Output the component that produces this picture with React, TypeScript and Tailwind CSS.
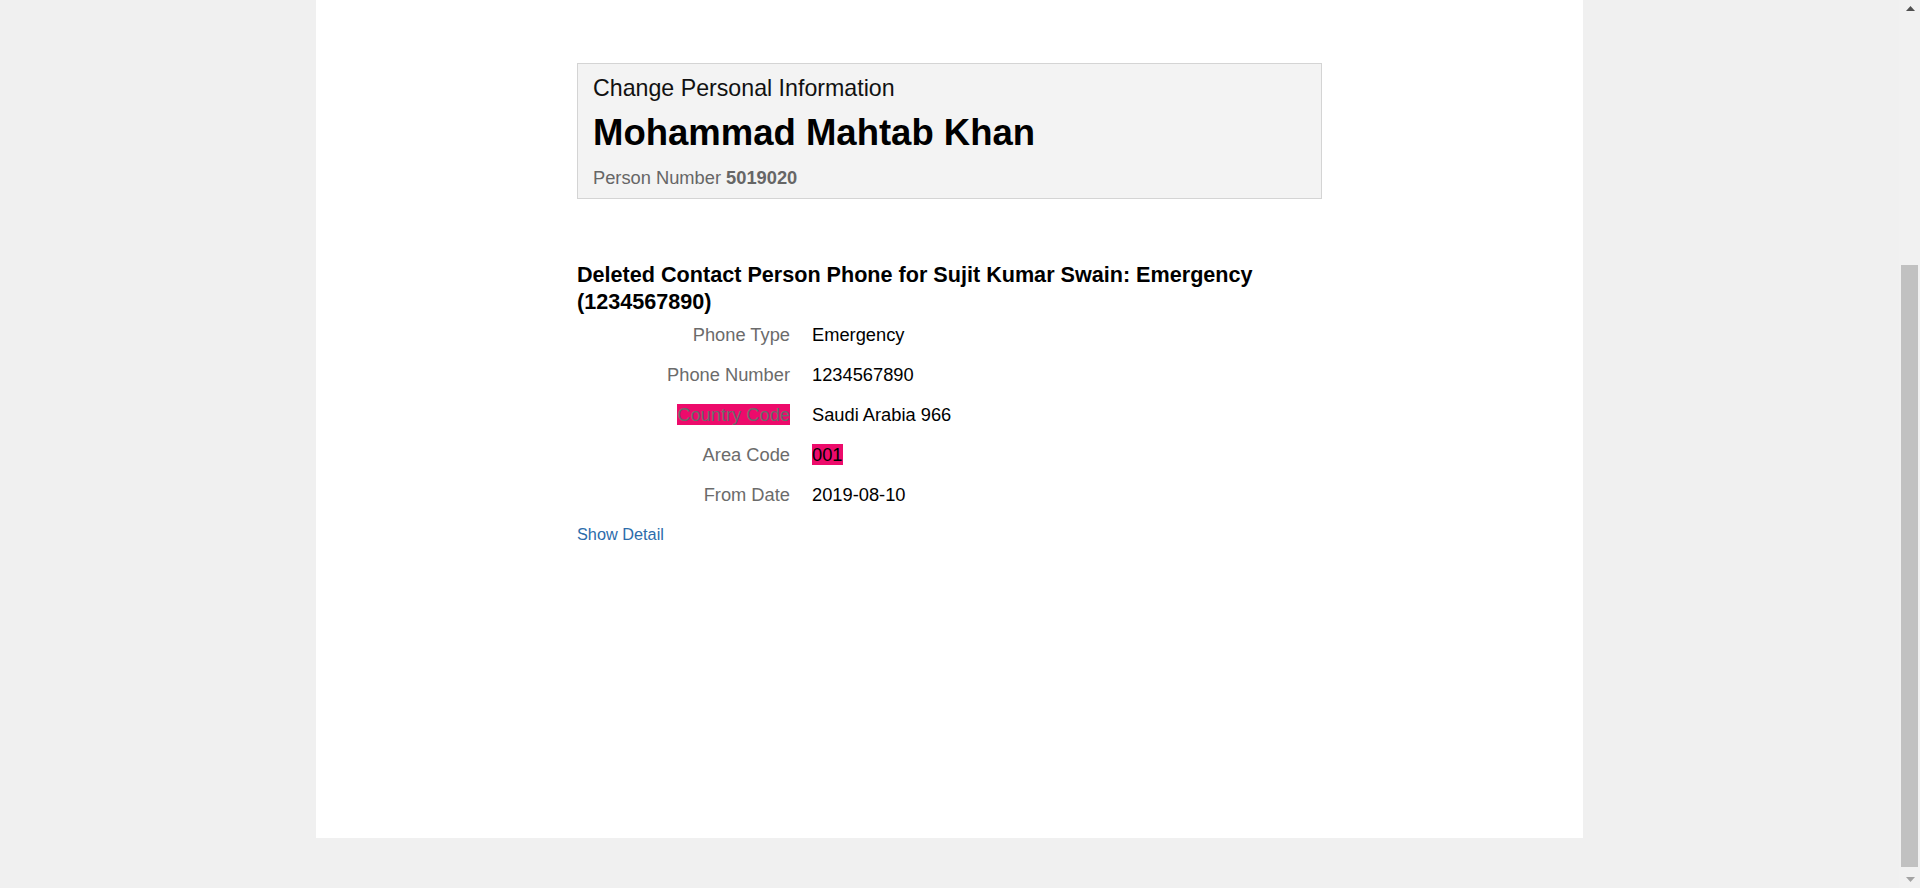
import React from 'react';

const rows = [
  { label: 'Phone Type', value: 'Emergency' },
  { label: 'Phone Number', value: '1234567890' },
  { label: 'Country Code', value: 'Saudi Arabia 966', labelMark: true },
  { label: 'Area Code', value: '001', valueMark: true },
  { label: 'From Date', value: '2019-08-10' },
];

const Scrollbar = () => (
  <div className="flex h-full w-[21px] flex-col bg-[#f1f1f1]">
    {/* up arrow */}
    <div className="flex h-[17px] items-center justify-center pl-[2px]">
      <svg width="9" height="5" viewBox="0 0 9 5">
        <path d="M0 5 L4.5 0 L9 5 Z" fill="#505050" />
      </svg>
    </div>
    <div className="flex-1 pl-[2px] pr-[2px] pt-[248px] pb-[4px]">
      <div className="h-full w-[17px] bg-[#c1c1c1]" />
    </div>
    {/* down arrow */}
    <div className="flex h-[17px] items-center justify-center pl-[2px]">
      <svg width="9" height="5" viewBox="0 0 9 5">
        <path d="M0 0 L9 0 L4.5 5 Z" fill="#a3a3a3" />
      </svg>
    </div>
  </div>
);

const App = () => {
  return (
    <div
      className="flex h-[888px] w-[1920px] overflow-hidden bg-[#f0f0f0] text-black"
      style={{ fontFamily: '"Liberation Sans", Arial, sans-serif' }}
    >
      <div className="flex-1">
        <div className="ml-[316px] h-[838px] w-[1267px] bg-white pt-[63px]">
          <div className="mx-auto w-[745px]">
            {/* Header box */}
            <div className="border border-[#d4d4d4] bg-[#f3f3f3] px-[15px] pb-[10px] pt-[10px]">
              <div className="text-[23.2px] leading-[28px] text-[#111]">Change Personal Information</div>
              <h1 className="mt-[10px] text-[36.5px] font-bold leading-[42px]">Mohammad Mahtab Khan</h1>
              <div className="mt-[13px] text-[18.3px] leading-[21px] text-[#666]">
                Person Number <span className="font-bold">5019020</span>
              </div>
            </div>

            {/* Change detail */}
            <h2 className="mb-[3px] mt-[62px] text-[21.6px] font-bold leading-[27px]">
              Deleted Contact Person Phone for Sujit Kumar Swain: Emergency (1234567890)
            </h2>
            <div className="flex flex-col">
              {rows.map((row) => (
                <div key={row.label} className="flex h-[40px] items-start pt-[6px] text-[18.3px] leading-[21px]">
                  <div className="w-[213px] text-right text-[#6b6b6b]">
                    <span className={row.labelMark ? 'bg-[#ed0b6b]' : ''}>{row.label}</span>
                  </div>
                  <div className="pl-[22px]">
                    <span className={row.valueMark ? 'bg-[#ed0b6b]' : ''}>{row.value}</span>
                  </div>
                </div>
              ))}
            </div>
            <a href="#" className="mt-[6px] block w-fit text-[16.3px] leading-[20px] text-[#2c6cab]">
              Show Detail
            </a>
          </div>
        </div>
      </div>
      <Scrollbar />
    </div>
  );
};

export default App;
